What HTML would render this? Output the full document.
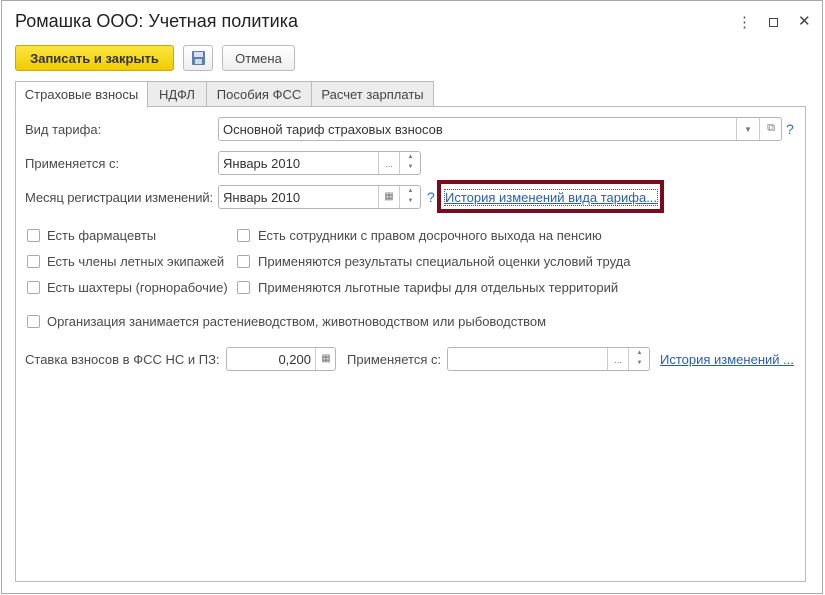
<!DOCTYPE html><html><head><meta charset="utf-8"><style>
*{box-sizing:border-box}body{margin:0;width:825px;height:595px;background:#fff;font-family:"Liberation Sans",sans-serif;font-size:13px;color:#4a4a4a;position:relative;overflow:hidden}
.a{position:absolute}
.win{left:1px;top:0;width:822px;height:594px;border:1px solid #aaa}
.fld{position:absolute;border:1px solid #b5b5b5;border-radius:3px;background:#fff;color:#333;padding:4px 0 0 4px;height:24px}
.btn{position:absolute;border-left:1px solid #ccc;top:0;height:22px;text-align:center;color:#777}
.cb{position:absolute;width:13px;height:13px;border:1px solid #aaa;border-radius:2px;background:#fff}
.t{position:absolute;white-space:nowrap}
.tab{position:absolute;top:81px;height:26px;border:1px solid #bbb;background:#ececec;padding-top:5px;text-align:center;color:#444}
</style></head><body>
<div class="a win"></div>
<div class="t" style="left:15px;top:11px;font-size:18px;color:#222">Ромашка ООО: Учетная политика</div>
<div class="t" style="left:737px;top:13px;font-size:15px;color:#555">⋮</div>
<div class="a" style="left:769px;top:18px;width:9px;height:9px;border:1px solid #444"></div>
<div class="t" style="left:798px;top:12px;font-size:15px;color:#444">✕</div>
<div class="a" style="left:15px;top:45px;width:159px;height:26px;background:linear-gradient(#fbe640,#f0cc00);border:1px solid #c9a800;border-radius:3px;font-weight:bold;color:#333;text-align:center;padding-top:5px">Записать и закрыть</div>
<div class="a" style="left:183px;top:45px;width:30px;height:26px;border:1px solid #bbb;border-radius:3px;background:linear-gradient(#fff,#eee)"><div class="a" style="left:8px;top:5px;width:13px;height:14px;background:#5a7fa8;border-radius:1px"></div><div class="a" style="left:10px;top:6px;width:9px;height:5px;background:#dde"></div><div class="a" style="left:11px;top:13px;width:7px;height:5px;background:#cfd8e3"></div></div>
<div class="a" style="left:222px;top:45px;width:73px;height:26px;border:1px solid #bbb;border-radius:3px;background:linear-gradient(#fff,#eee);text-align:center;padding-top:5px;color:#444">Отмена</div>
<div class="a" style="left:15px;top:106px;width:791px;height:476px;border:1px solid #bbb"></div>
<div class="tab" style="left:15px;width:133px;background:#fff;border-bottom-color:#fff;height:27px">Страховые взносы</div>
<div class="tab" style="left:147px;width:60px">НДФЛ</div>
<div class="tab" style="left:206px;width:106px">Пособия ФСС</div>
<div class="tab" style="left:311px;width:123px">Расчет зарплаты</div>
<div class="t" style="left:25px;top:122px">Вид тарифа:</div>
<div class="fld" style="left:218px;top:117px;width:564px">Основной тариф страховых взносов
<div class="btn" style="left:517px;width:23px;font-size:8px;padding-top:7px">▼</div><div class="btn" style="left:540px;width:23px;font-size:11px;padding-top:4px">⧉</div></div>
<div class="t" style="left:786px;top:121px;color:#2a6eb5;font-size:14px">?</div>
<div class="t" style="left:25px;top:156px">Применяется с:</div>
<div class="fld" style="left:218px;top:151px;width:203px">Январь 2010<div class="btn" style="left:159px;width:21px;font-size:9px;padding-top:7px">...</div><div class="btn" style="left:180px;width:22px;font-size:6px;line-height:10px">▲<br>▼</div></div>
<div class="t" style="left:25px;top:190px;letter-spacing:-0.1px">Месяц регистрации изменений:</div>
<div class="fld" style="left:218px;top:185px;width:203px">Январь 2010<div class="btn" style="left:159px;width:21px;font-size:10px;padding-top:5px">▦</div><div class="btn" style="left:180px;width:22px;font-size:6px;line-height:10px">▲<br>▼</div></div>
<div class="t" style="left:427px;top:189px;color:#2a6eb5;font-size:14px">?</div>
<div class="a" style="left:437px;top:180px;width:227px;height:33px;border:4px solid #7a0b1c"></div>
<div class="t" style="left:445px;top:190px;color:#2a5ea8;text-decoration:underline;outline:1px dotted #555">История изменений вида тарифа...</div>
<div class="cb" style="left:27px;top:229px"></div><div class="t" style="left:47px;top:228px">Есть фармацевты</div>
<div class="cb" style="left:237px;top:229px"></div><div class="t" style="left:258px;top:228px">Есть сотрудники с правом досрочного выхода на пенсию</div>
<div class="cb" style="left:27px;top:255px"></div><div class="t" style="left:47px;top:254px">Есть члены летных экипажей</div>
<div class="cb" style="left:237px;top:255px"></div><div class="t" style="left:258px;top:254px">Применяются результаты специальной оценки условий труда</div>
<div class="cb" style="left:27px;top:281px"></div><div class="t" style="left:47px;top:280px">Есть шахтеры (горнорабочие)</div>
<div class="cb" style="left:237px;top:281px"></div><div class="t" style="left:258px;top:280px">Применяются льготные тарифы для отдельных территорий</div>
<div class="cb" style="left:27px;top:315px"></div><div class="t" style="left:47px;top:314px">Организация занимается растениеводством, животноводством или рыбоводством</div>
<div class="t" style="left:25px;top:352px">Ставка взносов в ФСС НС и ПЗ:</div>
<div class="fld" style="left:226px;top:347px;width:110px;text-align:right;padding-right:24px">0,200<div class="btn" style="left:88px;width:21px;font-size:10px;padding-top:5px">▦</div></div>
<div class="t" style="left:347px;top:352px">Применяется с:</div>
<div class="fld" style="left:447px;top:347px;width:203px"><div class="btn" style="left:159px;width:21px;font-size:9px;padding-top:7px">...</div><div class="btn" style="left:180px;width:22px;font-size:6px;line-height:10px">▲<br>▼</div></div>
<div class="t" style="left:660px;top:352px;color:#2a5ea8;text-decoration:underline">История изменений ...</div>
</body></html>
